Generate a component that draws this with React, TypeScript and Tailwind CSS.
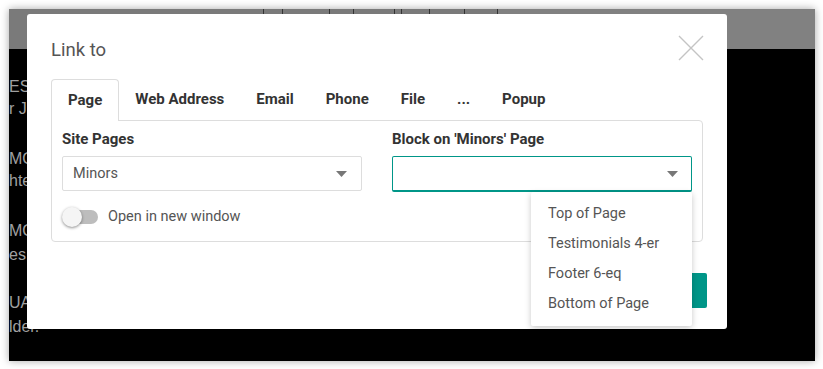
import React from "react";

const font = { fontFamily: "Roboto, 'Noto Sans', sans-serif" };

function Caret() {
  return (
    <svg width="11" height="6" viewBox="0 0 11 6" className="shrink-0">
      <path d="M0 0 L11 0 L5.5 6 Z" fill="#777" />
    </svg>
  );
}

export default function App() {
  return (
    <div className="w-[823px] h-[369px] bg-white overflow-hidden pt-[9px] pl-[9px]">
      <div className="relative w-[806px] h-[352px] bg-black overflow-hidden shadow-[0_0_8px_rgba(0,0,0,0.35)]">
        {/* top gray bar with separators */}
        <div className="h-[40px] bg-[#7a7a7a] flex">
          <div className="ml-[254px] w-[1px] h-full bg-[#333]" />
          <div className="ml-[18px] w-[1px] h-full bg-[#333]" />
          <div className="ml-[46px] w-[1px] h-full bg-[#333]" />
          <div className="ml-[23px] w-[1px] h-full bg-[#333]" />
          <div className="ml-[40px] w-[1px] h-full bg-[#333]" />
          <div className="ml-[6px] w-[1px] h-full bg-[#333]" />
          <div className="ml-[27px] w-[1px] h-full bg-[#333]" />
          <div className="ml-[34px] w-[1px] h-full bg-[#333]" />
          <div className="ml-[32px] w-[1px] h-full bg-[#333]" />
          <div className="flex-1 bg-[#818181]" />
        </div>
        {/* background page text */}
        <div
          className="flex flex-col pt-[27px] text-[16px] leading-[22px] text-[#a0a0a0]"
          style={{ fontFamily: "'Liberation Sans', Arial, sans-serif" }}
        >
          <div>ESS</div>
          <div>r J</div>
          <div className="mt-[28px]">MO</div>
          <div>hte</div>
          <div className="mt-[28px]">MO</div>
          <div className="mt-[2px]">es</div>
          <div className="mt-[26px]">UA</div>
          <div className="mt-[2px]">lder.</div>
        </div>

        {/* modal */}
        <div
          className="absolute left-[18px] top-[5px] w-[700px] h-[315px] bg-white rounded-[3px] text-[#333]"
          style={font}
        >
          <div className="flex items-start justify-between pl-[24px] pr-[23px]">
            <div className="pt-[24px] text-[18.5px] leading-[24px] text-[#555]">Link to</div>
            <svg width="26" height="26" viewBox="0 0 26 26" className="mt-[21px]">
              <path d="M1 1 L25 25 M25 1 L1 25" stroke="#c4c4c4" strokeWidth="1.4" />
            </svg>
          </div>

          {/* tabs */}
          <div className="mt-[17px] mx-[24px]">
            <div className="flex text-[15px] font-bold text-[#333] relative z-10">
              <div className="h-[42px] px-4 flex items-center border border-b-0 border-[#ddd] rounded-t-[4px] bg-white -mb-[1px]">
                Page
              </div>
              <div className="h-[41px] px-4 flex items-center">Web Address</div>
              <div className="h-[41px] px-4 flex items-center">Email</div>
              <div className="h-[41px] px-4 flex items-center">Phone</div>
              <div className="h-[41px] px-4 flex items-center">File</div>
              <div className="h-[41px] px-4 flex items-center">...</div>
              <div className="h-[41px] px-4 flex items-center">Popup</div>
            </div>
            <div className="border border-[#ddd] rounded-b-[4px] rounded-tr-[4px] px-[10px] pt-[8px] pb-[14px] h-[122px]">
              <div className="flex gap-[30px]">
                <div className="w-[300px]">
                  <div className="text-[15px] leading-[20px] font-bold text-[#333]">Site Pages</div>
                  <div className="mt-[7px] h-[35px] border border-[#ddd] rounded-[2px] flex items-center justify-between pl-[10px] pr-[14px]">
                    <span className="text-[14.5px] text-[#555]">Minors</span>
                    <Caret />
                  </div>
                  <div className="mt-[15px] flex items-center h-[22px]">
                    <div className="relative w-[37px] h-[22px] flex items-center">
                      <div className="ml-[4px] w-[32px] h-[14px] rounded-full bg-[#bdbdbd]" />
                      <div className="absolute left-0 top-[1px] w-[20px] h-[20px] rounded-full bg-[#f5f5f5] shadow-[0_1px_3px_rgba(0,0,0,0.45)]" />
                    </div>
                    <span className="ml-[9px] text-[14.5px] text-[#555]">Open in new window</span>
                  </div>
                </div>
                <div className="w-[300px]">
                  <div className="text-[15px] leading-[20px] font-bold text-[#333]">Block on 'Minors' Page</div>
                  <div className="mt-[7px] h-[36px] border border-[#009688] border-b-2 rounded-[2px] flex items-center justify-end pr-[13px]">
                    <Caret />
                  </div>
                </div>
              </div>
            </div>
          </div>

          {/* footer button */}
          <div className="flex justify-end pr-[20px] mt-[31px]">
            <div className="w-[80px] h-[35px] bg-[#009688] rounded-[2px] text-white text-[14px] font-bold flex items-center justify-center">
              Save
            </div>
          </div>

          {/* dropdown */}
          <div className="absolute left-[504px] top-[178px] w-[161px] h-[134px] bg-white rounded-[2px] shadow-[0_2px_6px_rgba(0,0,0,0.22)] pt-[7px] text-[14.5px] text-[#555]">
            <div className="h-[30px] flex items-center pl-[17px]">Top of Page</div>
            <div className="h-[30px] flex items-center pl-[17px]">Testimonials 4-er</div>
            <div className="h-[30px] flex items-center pl-[17px]">Footer 6-eq</div>
            <div className="h-[30px] flex items-center pl-[17px]">Bottom of Page</div>
          </div>
        </div>
      </div>
    </div>
  );
}
